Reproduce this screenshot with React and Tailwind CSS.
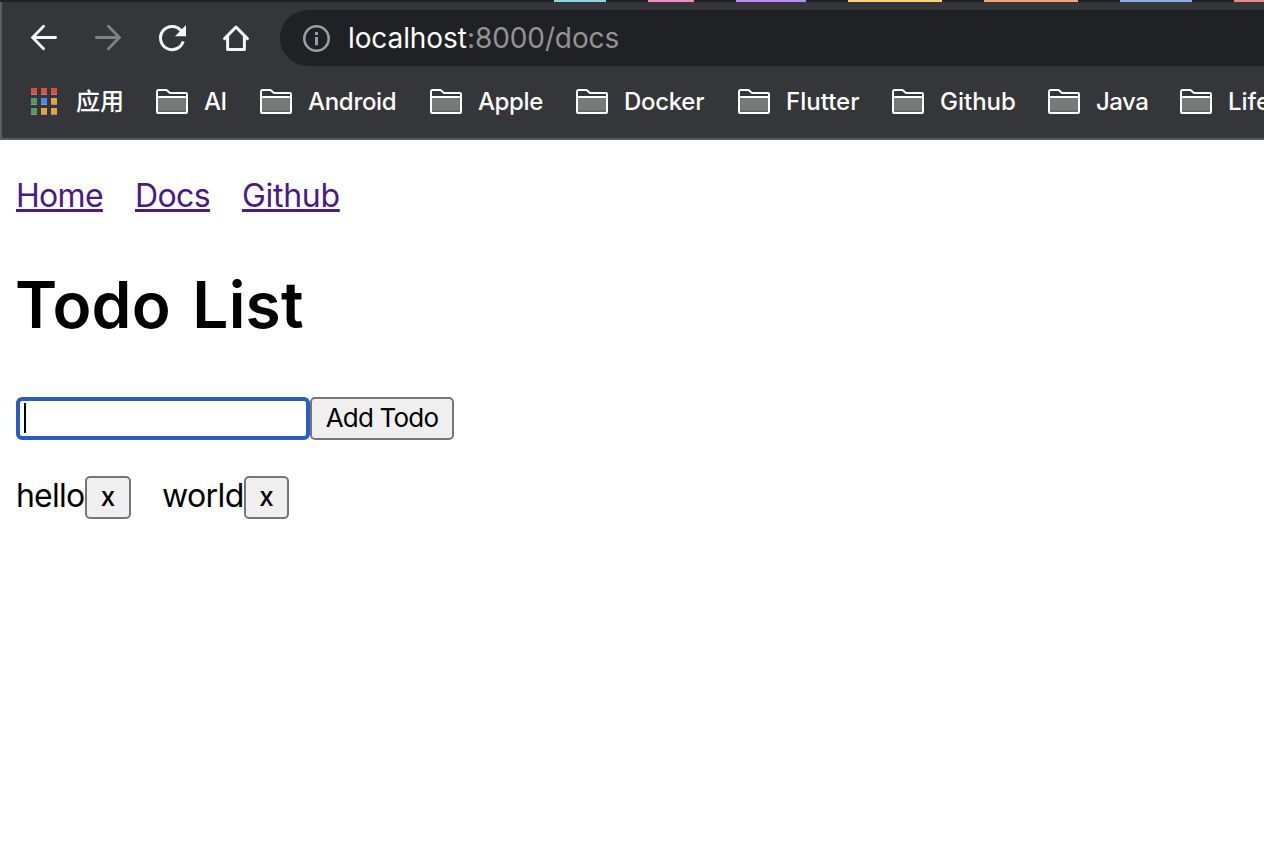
import React from "react";

const BOOKMARKS = [
  { label: "AI", width: "w-6", tracking: "tracking-[-0.4px]" },
  { label: "Android", width: "w-[90px]", tracking: "tracking-[-0.3px]" },
  { label: "Apple", width: "w-[66px]", tracking: "tracking-[-0.4px]" },
  { label: "Docker", width: "w-[82px]", tracking: "tracking-[-0.3px]" },
  { label: "Flutter", width: "w-[74px]", tracking: "tracking-normal" },
  { label: "Github", width: "w-[76px]", tracking: "tracking-normal" },
  { label: "Java", width: "w-[52px]", tracking: "tracking-[-0.5px]" },
  { label: "Life", width: "w-[52px]", tracking: "tracking-normal" },
];

const APP_COLORS = [
  "bg-[#dc4f43]", "bg-[#dc4f43]", "bg-[#dc4f43]",
  "bg-[#559a5f]", "bg-[#4a8af0]", "bg-[#e3a53c]",
  "bg-[#559a5f]", "bg-[#e3a53c]", "bg-[#e3a53c]",
];

function TabStrip() {
  return (
    <div className="flex h-[2px] shrink-0 bg-[#202124] pl-[554px]">
      <div className="w-[52px] shrink-0 bg-[#8ad6e6]" />
      <div className="ml-[42px] w-[46px] shrink-0 bg-[#f08dc6]" />
      <div className="ml-[42px] w-[70px] shrink-0 bg-[#bd8cf3]" />
      <div className="ml-[42px] w-[94px] shrink-0 bg-[#f9d573]" />
      <div className="ml-[42px] w-[94px] shrink-0 bg-[#f3a873]" />
      <div className="ml-[42px] w-[72px] shrink-0 bg-[#8daff0]" />
      <div className="ml-[42px] w-[30px] shrink-0 bg-[#e38d87]" />
    </div>
  );
}

function BackIcon() {
  return (
    <svg width="32" height="32" viewBox="0 0 32 32" fill="none" stroke="#f4f5f6" strokeWidth="2.8" strokeLinecap="round">
      <path d="M27.6 15.5H5M15.6 4.2L4.6 15.5l11 11.3" />
    </svg>
  );
}

function ForwardIcon() {
  return (
    <svg width="32" height="32" viewBox="0 0 32 32" fill="none" stroke="#818285" strokeWidth="2.8" strokeLinecap="round">
      <path d="M4.4 15.5H27M16.4 4.2l11 11.3-11 11.3" />
    </svg>
  );
}

function ReloadIcon() {
  return (
    <svg width="32" height="32" viewBox="0 0 32 32" fill="none">
      <path d="M25.2 8.8A11.6 11.6 0 1 0 27.2 19.4" stroke="#f4f5f6" strokeWidth="3" />
      <path d="M30 3v11.2H19z" fill="#f4f5f6" />
    </svg>
  );
}

function HomeIcon() {
  return (
    <svg width="32" height="32" viewBox="0 0 32 32" fill="none" stroke="#f4f5f6" strokeWidth="3" strokeLinejoin="round" strokeLinecap="round">
      <path d="M4.6 16.6L16 5l11.4 11.6" />
      <path d="M7.6 14v13.4h16.8V14" />
    </svg>
  );
}

function InfoIcon() {
  return (
    <svg width="28" height="28" viewBox="0 0 28 28" fill="none">
      <circle cx="14.5" cy="14.5" r="12.2" stroke="#9a9da1" strokeWidth="2.6" />
      <path d="M13 8h3v3h-3zM13 13h3v8.2h-3z" fill="#9a9da1" />
    </svg>
  );
}

function FolderIcon() {
  return (
    <svg width="32" height="26" viewBox="0 0 32 26" fill="none" className="shrink-0">
      <path d="M2 9h28v14H2z" fill="#77787a" />
      <path d="M2 21.5h28V23H2z" fill="#606164" />
      <path d="M1 23V3q0-2 1.5-2H10.5l3.5 3H30q1 0 1 1v18q0 1-1 1H2q-1 0-1-1zM1 8h30" stroke="#fff" strokeWidth="2" />
    </svg>
  );
}

function Toolbar() {
  return (
    <div className="flex h-[72px] items-center pl-7">
      <div className="flex items-center gap-8">
        <BackIcon />
        <ForwardIcon />
        <ReloadIcon />
        <HomeIcon />
      </div>
      <div className="ml-7 flex h-14 flex-1 items-center rounded-l-full bg-[#202124] pl-[22px]">
        <InfoIcon />
        <div className="ml-[18px] flex text-[28px] leading-8 whitespace-nowrap">
          <span className="w-[119px] tracking-[-0.1px] text-white">localhost</span>
          <span className="tracking-[-0.1px] text-[#929395]">:8000/docs</span>
        </div>
      </div>
    </div>
  );
}

function BookmarksBar() {
  return (
    <div className="flex h-14 items-center overflow-hidden pl-[31px] text-2xl leading-8 whitespace-nowrap text-white">
      <div className="mb-[2px] grid shrink-0 grid-cols-3 gap-x-1 gap-y-[3px]">
        {APP_COLORS.map((color, i) => (
          <div key={i} className={"h-[7px] w-[6px] border-b border-[#929395] " + color} />
        ))}
      </div>
      <span className="ml-[19px] w-20 shrink-0 font-medium">应用</span>
      <div className="flex gap-8">
        {BOOKMARKS.map((b) => (
          <div key={b.label} className="flex shrink-0 items-center gap-4">
            <FolderIcon />
            <span className={"font-medium " + b.width + " " + b.tracking}>{b.label}</span>
          </div>
        ))}
      </div>
    </div>
  );
}

function TodoItem({ text, textClass, buttonClass }) {
  return (
    <li className="flex">
      <span className={"pt-px text-[32px] leading-[38px] " + textClass}>{text}</span>
      <button className={"h-[43px] rounded-[5px] border-2 border-[#767676] bg-[#efefef] pb-[2px] text-[26px] leading-[36px] font-medium " + buttonClass}>
        x
      </button>
    </li>
  );
}

export default function App() {
  return (
    <div className="h-[860px] w-[1264px] overflow-hidden bg-white font-['Inter','Noto_Sans_CJK_SC',sans-serif]">
      <header className="flex h-[140px] flex-col border-b-2 border-[#5c5d60] bg-[#35363a]">
        <TabStrip />
        <div className="flex-1 border-l-2 border-[#5c5d60]">
          <div className="-ml-[2px]">
            <Toolbar />
            <BookmarksBar />
          </div>
        </div>
      </header>
      <main className="px-4 pt-[37px] text-black">
        <nav className="flex h-[38px] text-[32px] leading-[38px] text-[#4b1a87]">
          <a href="#home" className="mr-8 w-[87px] tracking-[-0.7px] whitespace-nowrap underline decoration-[3px] underline-offset-[2px]">Home</a>
          <a href="#docs" className="mr-8 w-[75px] tracking-[-0.6px] whitespace-nowrap underline decoration-[3px] underline-offset-[2px]">Docs</a>
          <a href="#github" className="tracking-[-0.3px] whitespace-nowrap underline decoration-[3px] underline-offset-[2px]">Github</a>
        </nav>
        <h1 className="mt-[52px] -ml-px h-[76px] text-[64px] leading-[76px] font-semibold tracking-[0.2px] whitespace-nowrap [word-spacing:5px]">Todo List</h1>
        <form className="mt-[54px] flex h-[43px]" onSubmit={(e) => e.preventDefault()}>
          <div className="flex w-[294px] items-center rounded-[6px] border-4 border-[#295dc2] pl-1">
            <div className="mb-px h-[30px] w-[2px] bg-black" />
          </div>
          <button className="w-36 rounded-[5px] border-2 border-[#767676] bg-[#efefef] pb-[2px] text-[26px] leading-[36px] tracking-[-0.8px] whitespace-nowrap">
            Add Todo
          </button>
        </form>
        <ul className="mt-9 flex h-[43px] gap-8">
          <TodoItem text="hello" textClass="w-[69px] tracking-[-0.8px]" buttonClass="w-[46px]" />
          <TodoItem text="world" textClass="-ml-px w-[82px] tracking-[-0.6px]" buttonClass="w-[45px]" />
        </ul>
      </main>
    </div>
  );
}
